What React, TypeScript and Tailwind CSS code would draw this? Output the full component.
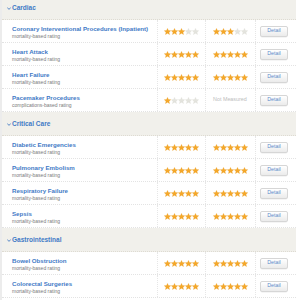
import React from "react";

type Row = { name: string; sub: string; a: number; b: number | null };
type Group = { cat: string; rows: Row[] };

const groups: Group[] = [
  {
    cat: "Cardiac",
    rows: [
      { name: "Coronary Interventional Procedures (Inpatient)", sub: "mortality-based rating", a: 3, b: 3 },
      { name: "Heart Attack", sub: "mortality-based rating", a: 5, b: 5 },
      { name: "Heart Failure", sub: "mortality-based rating", a: 5, b: 5 },
      { name: "Pacemaker Procedures", sub: "complications-based rating", a: 1, b: null },
    ],
  },
  {
    cat: "Critical Care",
    rows: [
      { name: "Diabetic Emergencies", sub: "mortality-based rating", a: 5, b: 5 },
      { name: "Pulmonary Embolism", sub: "mortality-based rating", a: 5, b: 5 },
      { name: "Respiratory Failure", sub: "mortality-based rating", a: 5, b: 5 },
      { name: "Sepsis", sub: "mortality-based rating", a: 5, b: 5 },
    ],
  },
  {
    cat: "Gastrointestinal",
    rows: [
      { name: "Bowel Obstruction", sub: "mortality-based rating", a: 5, b: 5 },
      { name: "Colorectal Surgeries", sub: "mortality-based rating", a: 5, b: 5 },
    ],
  },
];

function Star({ on }: { on: boolean }) {
  return (
    <svg width="7" height="7" viewBox="0 0 24 24" className="shrink-0">
      <polygon
        points="12,1.5 15.2,8.6 23,9.3 17.1,14.5 18.9,22.3 12,18.2 5.1,22.3 6.9,14.5 1,9.3 8.8,8.6"
        fill={on ? "#f5a82a" : "#e4e4de"}
        stroke={on ? "#e59614" : "#d8d8d2"}
        strokeWidth="1"
        strokeLinejoin="round"
      />
    </svg>
  );
}

function Stars({ n }: { n: number }) {
  return (
    <div className="flex">
      {[0, 1, 2, 3, 4].map((i) => (
        <Star key={i} on={i < n} />
      ))}
    </div>
  );
}

function Header({ title }: { title: string }) {
  return (
    <div className="h-[24px] bg-[#f1f0eb] flex items-center pt-[2px] pl-[5px] gap-[1px] border-b border-dotted border-[#dedbd2]">
      <svg width="4" height="3" viewBox="0 0 4 3">
        <path d="M0.3 0.5 L2 2.4 L3.7 0.5" stroke="#4a7fc4" strokeWidth="0.9" fill="none" />
      </svg>
      <span className="text-[6.5px] font-bold text-[#3f7ac6] leading-none">{title}</span>
    </div>
  );
}

function DataRow({ r }: { r: Row }) {
  return (
    <div className="h-[23px] flex border-b border-dotted border-[#e3e3e3] bg-white">
      <div className="w-[155px] shrink-0 pl-[10px] pt-[5px] flex flex-col overflow-hidden whitespace-nowrap">
        <span className="text-[6.15px] font-bold text-[#3f7ac6] leading-[8px]">{r.name}</span>
        <span className="text-[5px] text-[#7a7a7a] leading-[6px]">{r.sub}</span>
      </div>
      <div className="w-[48px] shrink-0 border-l border-dotted border-[#e6e6e6] pl-[6px] flex items-center">
        <Stars n={r.a} />
      </div>
      <div className="w-[50px] shrink-0 border-l border-dotted border-[#e6e6e6] pl-[7px] flex items-center">
        {r.b === null ? (
          <span className="text-[5.4px] text-[#bdbdbd] leading-none">Not Measured</span>
        ) : (
          <Stars n={r.b} />
        )}
      </div>
      <div className="flex-1 border-l border-dotted border-[#e6e6e6] pl-[4px] flex items-center">
        <div className="w-[28px] h-[11px] rounded-[2px] border border-[#d6d6d6] bg-gradient-to-b from-white to-[#ebebeb] flex items-center justify-center shadow-[0_0.5px_0.5px_rgba(0,0,0,0.08)]">
          <span className="text-[5.3px] text-[#5a8acb] leading-none">Detail</span>
        </div>
      </div>
    </div>
  );
}

export default function App() {
  return (
    <div
      className="w-[296px] h-[300px] overflow-hidden bg-white border-l-[2px] border-[#ececec]"
      style={{ fontFamily: '"Liberation Sans", Arial, sans-serif' }}
    >
      <div className="-mt-[4px]">
        {groups.map((g) => (
          <div key={g.cat}>
            <Header title={g.cat} />
            {g.rows.map((r) => (
              <DataRow key={r.name} r={r} />
            ))}
          </div>
        ))}
      </div>
    </div>
  );
}
